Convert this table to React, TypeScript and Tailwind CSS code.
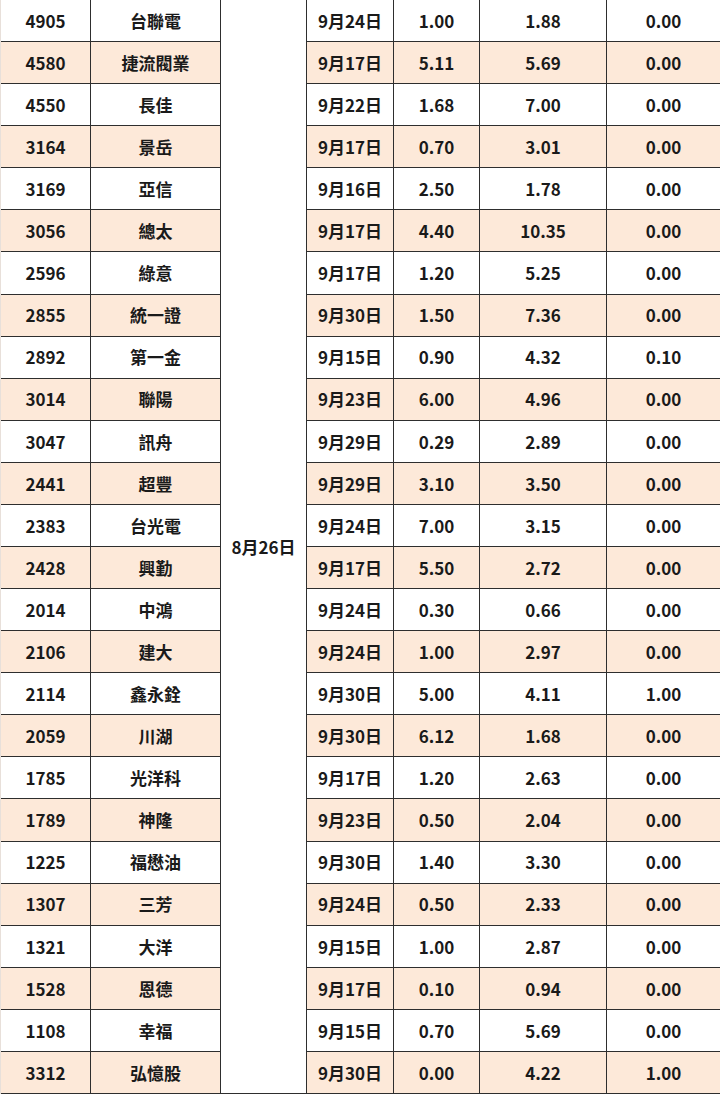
import React from 'react';

// 代號, 名稱, 日期, 股利1, 股價/值, 其他
const rows: [string, string, string, string, string, string][] = [
  ['4905', '台聯電', '9月24日', '1.00', '1.88', '0.00'],
  ['4580', '捷流閥業', '9月17日', '5.11', '5.69', '0.00'],
  ['4550', '長佳', '9月22日', '1.68', '7.00', '0.00'],
  ['3164', '景岳', '9月17日', '0.70', '3.01', '0.00'],
  ['3169', '亞信', '9月16日', '2.50', '1.78', '0.00'],
  ['3056', '總太', '9月17日', '4.40', '10.35', '0.00'],
  ['2596', '綠意', '9月17日', '1.20', '5.25', '0.00'],
  ['2855', '統一證', '9月30日', '1.50', '7.36', '0.00'],
  ['2892', '第一金', '9月15日', '0.90', '4.32', '0.10'],
  ['3014', '聯陽', '9月23日', '6.00', '4.96', '0.00'],
  ['3047', '訊舟', '9月29日', '0.29', '2.89', '0.00'],
  ['2441', '超豐', '9月29日', '3.10', '3.50', '0.00'],
  ['2383', '台光電', '9月24日', '7.00', '3.15', '0.00'],
  ['2428', '興勤', '9月17日', '5.50', '2.72', '0.00'],
  ['2014', '中鴻', '9月24日', '0.30', '0.66', '0.00'],
  ['2106', '建大', '9月24日', '1.00', '2.97', '0.00'],
  ['2114', '鑫永銓', '9月30日', '5.00', '4.11', '1.00'],
  ['2059', '川湖', '9月30日', '6.12', '1.68', '0.00'],
  ['1785', '光洋科', '9月17日', '1.20', '2.63', '0.00'],
  ['1789', '神隆', '9月23日', '0.50', '2.04', '0.00'],
  ['1225', '福懋油', '9月30日', '1.40', '3.30', '0.00'],
  ['1307', '三芳', '9月24日', '0.50', '2.33', '0.00'],
  ['1321', '大洋', '9月15日', '1.00', '2.87', '0.00'],
  ['1528', '恩德', '9月17日', '0.10', '0.94', '0.00'],
  ['1108', '幸福', '9月15日', '0.70', '5.69', '0.00'],
  ['3312', '弘憶股', '9月30日', '0.00', '4.22', '1.00'],
];

const cell = 'flex items-center justify-center border-r border-b border-[#2e2e2e]';

export default function App() {
  return (
    <div className="w-[720px] h-[1095px] overflow-hidden bg-white text-[17px] font-bold text-[#1a1a1a] font-['Noto_Sans_CJK_TC','Noto_Sans',sans-serif]">
      <div className="grid grid-cols-[90px_130px_86px_87px_86px_127px_114px] grid-rows-[repeat(26,42.08px)] border-l border-l-[#e8e0da]">
        {/* 合併儲存格：先佔第 3 欄，其餘儲存格自動排入 */}
        <div className={`${cell} bg-white col-start-3 row-start-1 row-span-26`}>8月26日</div>
        {rows.map((r, i) => {
          const bg = i % 2 === 1 ? 'bg-[#fde9d9]' : 'bg-white';
          return (
            <React.Fragment key={r[0] + i}>
              {r.map((v, j) => (
                <div key={j} className={`${cell} ${bg}`}>{v}</div>
              ))}
            </React.Fragment>
          );
        })}
      </div>
    </div>
  );
}
